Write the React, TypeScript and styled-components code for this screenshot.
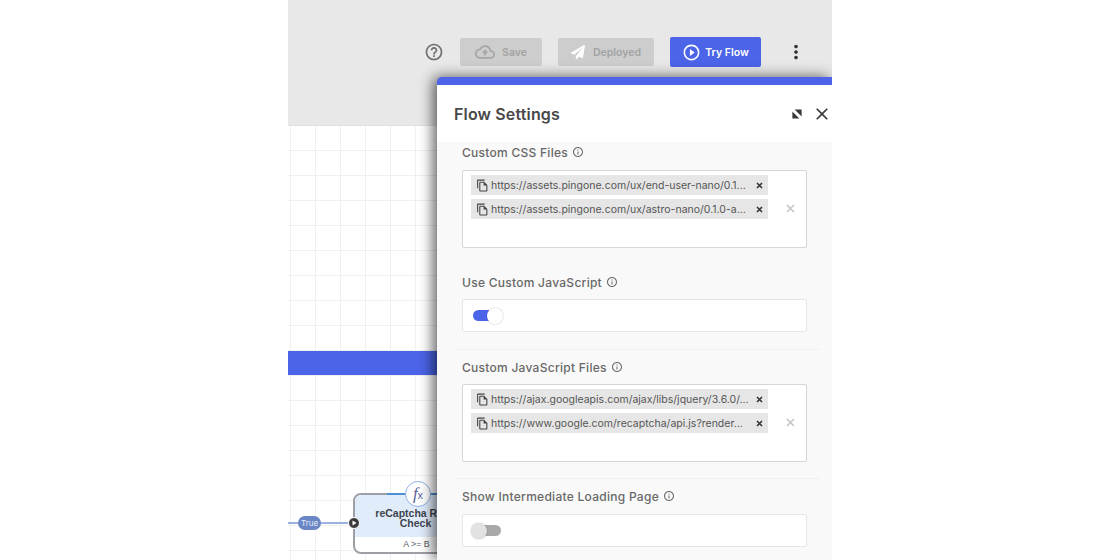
import React from 'react';
import styled, { createGlobalStyle } from 'styled-components';
import {
  MdClose,
  MdHelpOutline,
  MdInfoOutline,
  MdMoreVert,
  MdOutlineCloudUpload,
  MdOutlineFileCopy,
  MdPlayCircleOutline,
} from 'react-icons/md';
import { FaPaperPlane } from 'react-icons/fa';

const GlobalStyle = createGlobalStyle`
  html, body {
    margin: 0;
    height: 100%;
    background: #ffffff;
    font-family: 'Inter', 'Liberation Sans', sans-serif;
  }
`;

const Stage = styled.div`
  position: relative;
  width: 544px;
  height: 560px;
  margin-left: 288px;
  overflow: hidden;
  display: flex;
  flex-direction: column;
`;

const Toolbar = styled.header`
  height: 126px;
  box-sizing: border-box;
  flex-shrink: 0;
  background: #e8e8e8;
  border-bottom: 1px solid #e0e0e0;
  display: flex;
  align-items: flex-start;
  padding: 37px 0 0 136px;
`;

const HelpButton = styled.span`
  width: 20px;
  height: 30px;
  margin-right: 16px;
  display: flex;
  align-items: center;
  justify-content: center;
  color: #6e6e6e;
  font-size: 20px;
`;

const ActionButton = styled.button<{ $primary?: boolean; $width: number; $gap: number }>`
  width: ${p => p.$width}px;
  height: ${p => (p.$primary ? 30 : 28)}px;
  margin-top: ${p => (p.$primary ? 0 : 1)}px;
  margin-right: 16px;
  padding: 0;
  border: 0;
  border-radius: 2px;
  background: ${p => (p.$primary ? '#4b64e8' : '#cdcdcd')};
  color: ${p => (p.$primary ? '#ffffff' : '#a3a3a3')};
  font-family: inherit;
  font-size: 10.5px;
  font-weight: 600;
  display: flex;
  align-items: center;
  justify-content: center;
  gap: ${p => p.$gap}px;
`;

const MenuButton = styled.span`
  margin-left: 8px;
  height: 30px;
  display: flex;
  align-items: center;
  color: #333333;
  font-size: 22px;
`;

const Canvas = styled.main`
  position: relative;
  flex: 1;
  background-color: #ffffff;
  background-image:
    linear-gradient(to right, #f0f0f0 1px, transparent 1px),
    linear-gradient(to bottom, #f0f0f0 1px, transparent 1px);
  background-size: 25px 25px;
  background-position: 2px -1px;
`;

const Band = styled.div`
  position: absolute;
  left: 0;
  right: 0;
  top: 225px;
  height: 24px;
  background: #4b64e8;
`;

const Connector = styled.div`
  position: absolute;
  left: 0;
  top: 396px;
  width: 66px;
  height: 2px;
  background: #9db0e2;
`;

const EdgeLabel = styled.span`
  position: absolute;
  left: 10px;
  top: 390px;
  width: 23px;
  height: 14px;
  border-radius: 7px;
  background: #6b86c4;
  color: #e6ecf8;
  font-size: 8px;
  line-height: 14px;
  text-align: center;
`;

const NodeCard = styled.div`
  position: absolute;
  left: 65px;
  top: 367px;
  width: 125px;
  height: 61px;
  box-sizing: border-box;
  border: 2px solid #9ca0a6;
  border-radius: 8px;
  background: #ffffff;
  overflow: hidden;
  font-family: 'Liberation Sans', sans-serif;
`;

const NodeBody = styled.div`
  height: 42px;
  box-sizing: border-box;
  padding-top: 13px;
  background: #e1ecfb;
  color: #3f444d;
  font-size: 10.5px;
  font-weight: 700;
  line-height: 10px;
  text-align: center;
  text-indent: 6px;
  white-space: nowrap;
`;

const NodeFooter = styled.div`
  padding-left: 2px;
  color: #555b63;
  font-size: 8.8px;
  line-height: 15px;
  text-align: center;
`;

const NodeTopLine = styled.div`
  position: absolute;
  left: 99px;
  top: 367px;
  width: 50px;
  height: 2px;
  background: #4f8fd6;
`;

const NodePort = styled.span`
  position: absolute;
  left: 60px;
  top: 391px;
  width: 12px;
  height: 12px;
  box-sizing: border-box;
  border: 1px solid #ffffff;
  border-radius: 50%;
  background: #3b3b3b;
  display: flex;
  align-items: center;
  justify-content: center;
`;

const FxBadge = styled.span`
  position: absolute;
  left: 117px;
  top: 355px;
  width: 26px;
  height: 26px;
  box-sizing: border-box;
  border: 1px solid #8fb3e3;
  border-radius: 50%;
  background: #ffffff;
  color: #5a5f99;
  font-family: 'Liberation Serif', serif;
  font-style: italic;
  font-size: 17px;
  line-height: 23px;
  text-align: center;
  small {
    font-size: 11px;
    font-style: normal;
    font-family: 'Liberation Sans', sans-serif;
  }
`;

const Panel = styled.aside`
  position: absolute;
  left: 149px;
  top: 77px;
  bottom: 0;
  width: 395px;
  border-top: 8px solid #4b64e8;
  border-top-left-radius: 5px;
  background: #f9f9f9;
  box-shadow: -4px 0 14px rgba(0, 0, 0, 0.62);
  display: flex;
  flex-direction: column;
  overflow: hidden;
`;

const PanelHeader = styled.div`
  height: 57px;
  flex-shrink: 0;
  background: #ffffff;
  padding: 0 0 0 17px;
  display: flex;
  align-items: center;
`;

const PanelTitle = styled.h2`
  flex: 1;
  margin: 0;
  font-size: 16px;
  font-weight: 600;
  letter-spacing: 0.15px;
  color: #484848;
`;

const HeaderIcons = styled.div`
  display: flex;
  align-items: center;
  gap: 10px;
  color: #3a3a3a;
  font-size: 20px;
`;

const PanelBody = styled.div`
  padding: 2px 0 0;
`;

const Section = styled.section<{ $divided?: boolean; $gap: number }>`
  margin: 0 13px 9px 17px;
  padding: 0 0 ${p => p.$gap}px 8px;
  border-bottom: ${p => (p.$divided ? '1px solid #f0f0f4' : '0')};
`;

const Label = styled.div<{ $gap: number }>`
  height: 16px;
  margin-bottom: ${p => p.$gap}px;
  display: flex;
  align-items: center;
  gap: 4px;
  color: #686868;
  font-size: 12px;
  font-weight: 500;
  letter-spacing: 0.27px;
  svg {
    font-size: 12px;
  }
`;

const FieldBox = styled.div<{ $tall?: boolean; $strong?: boolean }>`
  position: relative;
  width: 345px;
  height: ${p => (p.$tall ? 78 : 33)}px;
  box-sizing: border-box;
  background: #ffffff;
  border: 1px solid ${p => (p.$strong ? '#d6d6d6' : '#e6e6ea')};
  border-radius: 2px;
  padding: ${p => (p.$tall ? '4px 8px' : '0 10px')};
  display: flex;
  flex-direction: ${p => (p.$tall ? 'column' : 'row')};
  align-items: ${p => (p.$tall ? 'flex-start' : 'center')};
  gap: 4px;
`;

const Chip = styled.div`
  width: 297px;
  height: 20px;
  box-sizing: border-box;
  padding: 0 5px;
  background: #e6e6e6;
  color: #555555;
  font-size: 10.5px;
  display: flex;
  align-items: center;
  gap: 2px;
  white-space: nowrap;
  svg {
    flex-shrink: 0;
  }
`;

const ChipText = styled.span`
  flex: 1;
`;

const ClearAll = styled.span`
  position: absolute;
  right: 11px;
  top: 33px;
  color: #c4c4c4;
  display: flex;
`;

const SwitchTrack = styled.span<{ $on?: boolean }>`
  position: relative;
  width: 28px;
  height: 11px;
  border-radius: 6px;
  background: ${p => (p.$on ? '#4b64e8' : '#a9a9a9')};
`;

const SwitchKnob = styled.span<{ $on?: boolean }>`
  position: absolute;
  top: -2.5px;
  left: ${p => (p.$on ? '14px' : '-2px')};
  width: 16px;
  height: 16px;
  border-radius: 50%;
  background: ${p => (p.$on ? '#ffffff' : '#e2e2e2')};
  box-shadow: 0 0 2px rgba(0, 0, 0, 0.25);
`;

const CollapseIcon = () => (
  <svg width="10" height="10" viewBox="0 0 10 10" fill="currentColor">
    <path d="M2.6 0.4 H9.6 V7.4 Z" />
    <path d="M0.4 2.6 V9.6 H7.4 Z" />
  </svg>
);

const ChipClose = () => (
  <svg width="7" height="7" viewBox="0 0 7 7" stroke="#333333" strokeWidth="1.6">
    <path d="M1 1 L6 6 M6 1 L1 6" />
  </svg>
);

type FileChipsProps = {
  files: string[];
};

const FileChips = ({ files }: FileChipsProps) => (
  <FieldBox $tall $strong>
    {files.map(file => (
      <Chip key={file}>
        <MdOutlineFileCopy size={13} color="#444444" />
        <ChipText>{file}</ChipText>
        <ChipClose />
      </Chip>
    ))}
    <ClearAll>
      <svg width="9" height="9" viewBox="0 0 9 9" stroke="currentColor" strokeWidth="1.5">
        <path d="M1 1 L8 8 M8 1 L1 8" />
      </svg>
    </ClearAll>
  </FieldBox>
);

const App = () => (
  <>
    <GlobalStyle />
    <Stage>
      <Toolbar>
        <HelpButton><MdHelpOutline /></HelpButton>
        <ActionButton $width={82} $gap={7}>
          <MdOutlineCloudUpload size={20} color="#a6a6a6" />
          Save
        </ActionButton>
        <ActionButton $width={96} $gap={8}>
          <FaPaperPlane size={14} color="#ffffff" />
          Deployed
        </ActionButton>
        <ActionButton $primary $width={91} $gap={4}>
          <MdPlayCircleOutline size={19} />
          Try Flow
        </ActionButton>
        <MenuButton><MdMoreVert /></MenuButton>
      </Toolbar>
      <Canvas>
        <Band />
        <Connector />
        <EdgeLabel>True</EdgeLabel>
        <NodeCard>
          <NodeBody>reCaptcha Result<br />Check</NodeBody>
          <NodeFooter>A &gt;= B</NodeFooter>
        </NodeCard>
        <NodeTopLine />
        <NodePort>
          <svg width="6" height="6" viewBox="0 0 6 6" fill="#ffffff"><path d="M1.5 0.5 L5.5 3 L1.5 5.5 Z" /></svg>
        </NodePort>
        <FxBadge>f<small>x</small></FxBadge>
      </Canvas>
      <Panel>
        <PanelHeader>
          <PanelTitle>Flow Settings</PanelTitle>
          <HeaderIcons>
            <CollapseIcon />
            <MdClose />
          </HeaderIcons>
        </PanelHeader>
        <PanelBody>
          <Section $gap={17}>
            <Label $gap={10}>Custom CSS Files <MdInfoOutline /></Label>
            <FileChips
              files={[
                'https://assets.pingone.com/ux/end-user-nano/0.1...',
                'https://assets.pingone.com/ux/astro-nano/0.1.0-a...',
              ]}
            />
          </Section>
          <Section $divided $gap={17}>
            <Label $gap={9}>Use Custom JavaScript <MdInfoOutline /></Label>
            <FieldBox>
              <SwitchTrack $on><SwitchKnob $on /></SwitchTrack>
            </FieldBox>
          </Section>
          <Section $divided $gap={16}>
            <Label $gap={9}>Custom JavaScript Files <MdInfoOutline /></Label>
            <FileChips
              files={[
                'https://ajax.googleapis.com/ajax/libs/jquery/3.6.0/...',
                'https://www.google.com/recaptcha/api.js?render...',
              ]}
            />
          </Section>
          <Section $gap={0}>
            <Label $gap={10}>Show Intermediate Loading Page <MdInfoOutline /></Label>
            <FieldBox>
              <SwitchTrack><SwitchKnob /></SwitchTrack>
            </FieldBox>
          </Section>
        </PanelBody>
      </Panel>
    </Stage>
  </>
);

export default App;
